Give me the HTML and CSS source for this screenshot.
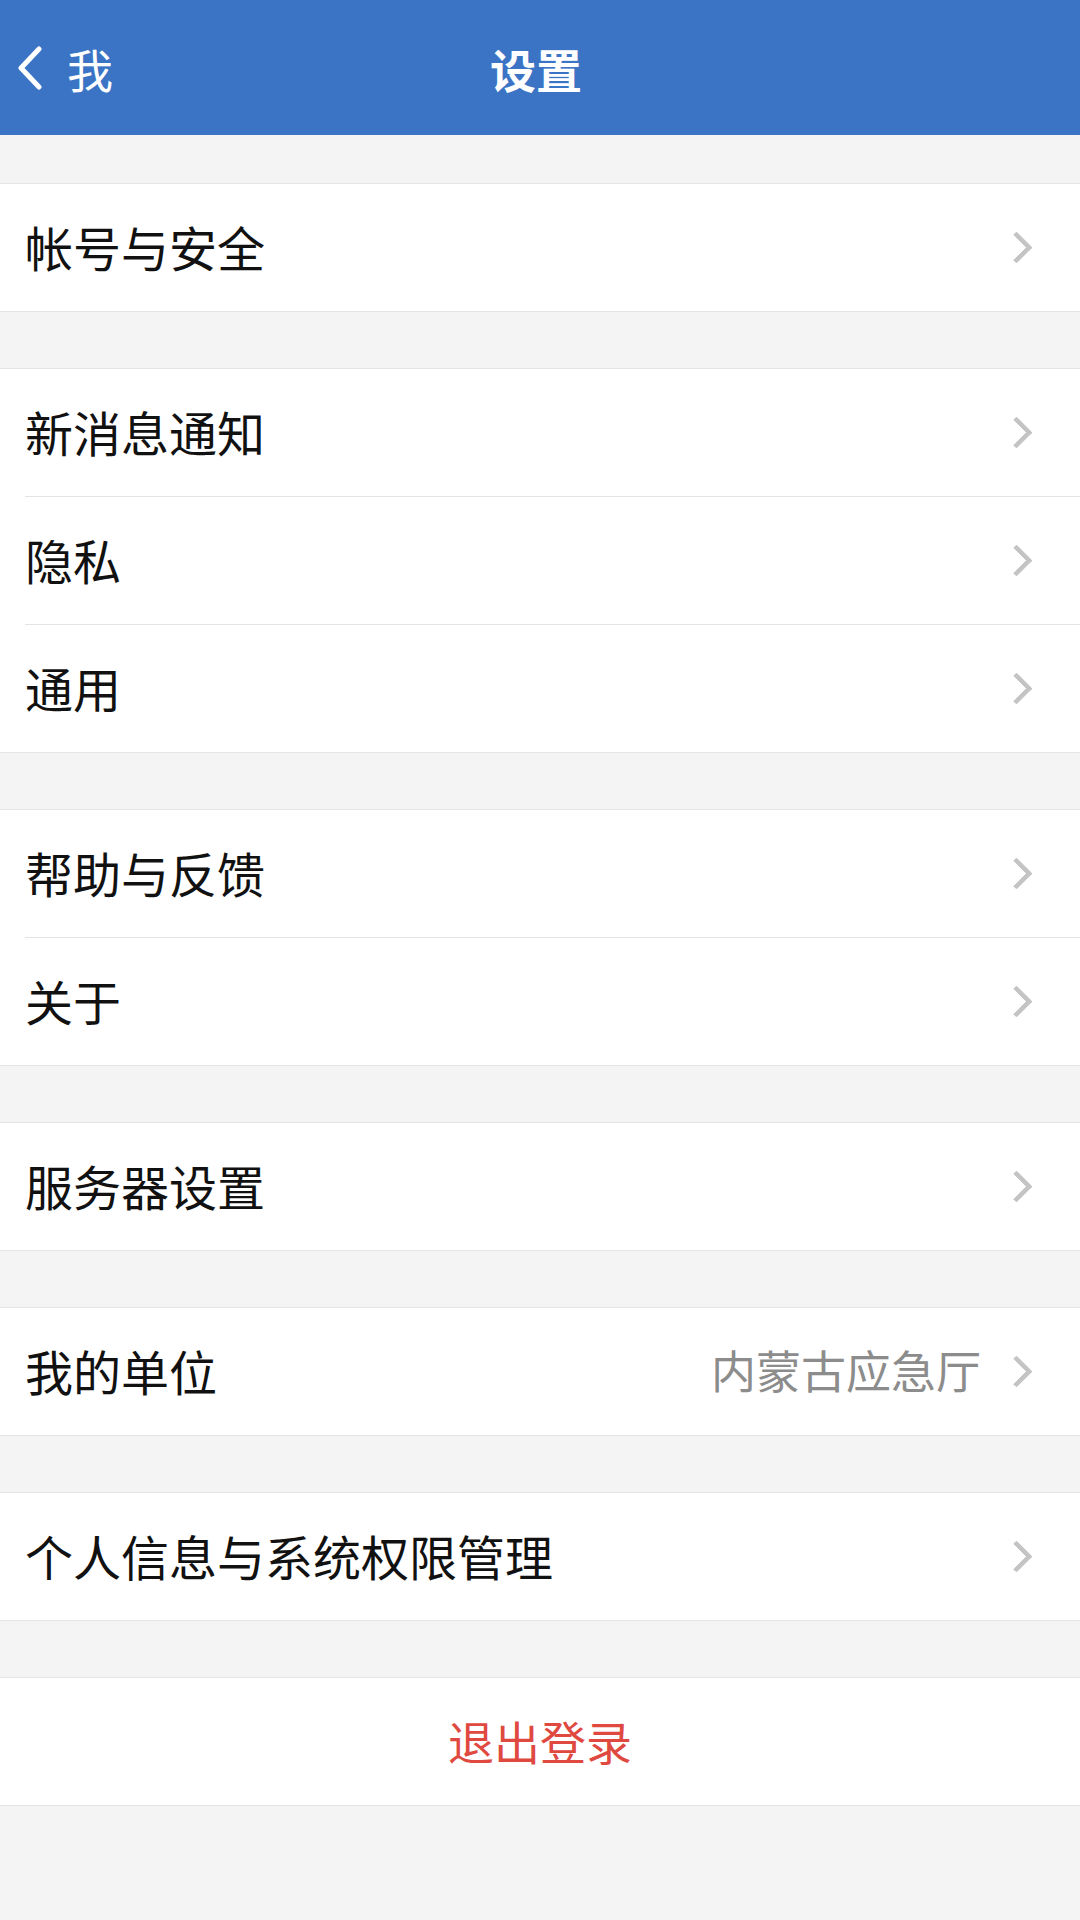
FILE: index.html
```html
<!DOCTYPE html>
<html lang="zh-CN">
<head>
    <meta charset="UTF-8">
    <meta name="viewport" content="width=device-width, initial-scale=1.0">
    <title>设置</title>
    <link rel="stylesheet" href="styles.css">
</head>
<body>
    <div class="page">
        <header class="navbar">
            <a class="nav-back" href="#">
                <svg class="back-icon" viewBox="0 0 26 44" width="26" height="44">
                    <path d="M22 3 L4 22 L22 41" fill="none" stroke="#fff" stroke-width="5" stroke-linecap="round" stroke-linejoin="round"/>
                </svg>
                <span>我</span>
            </a>
            <h1 class="nav-title">设置</h1>
            <div class="nav-right"></div>
        </header>

        <div class="group first">
            <a class="row" href="#"><div class="row-body"><span class="label">帐号与安全</span><i class="arrow"></i></div></a>
        </div>

        <div class="group">
            <a class="row" href="#"><div class="row-body"><span class="label">新消息通知</span><i class="arrow"></i></div></a>
            <a class="row" href="#"><div class="row-body"><span class="label">隐私</span><i class="arrow"></i></div></a>
            <a class="row" href="#"><div class="row-body"><span class="label">通用</span><i class="arrow"></i></div></a>
        </div>

        <div class="group">
            <a class="row" href="#"><div class="row-body"><span class="label">帮助与反馈</span><i class="arrow"></i></div></a>
            <a class="row" href="#"><div class="row-body"><span class="label">关于</span><i class="arrow"></i></div></a>
        </div>

        <div class="group">
            <a class="row" href="#"><div class="row-body"><span class="label">服务器设置</span><i class="arrow"></i></div></a>
        </div>

        <div class="group">
            <a class="row" href="#"><div class="row-body"><span class="label">我的单位</span><span class="value">内蒙古应急厅</span><i class="arrow"></i></div></a>
        </div>

        <div class="group">
            <a class="row" href="#"><div class="row-body"><span class="label">个人信息与系统权限管理</span><i class="arrow"></i></div></a>
        </div>

        <div class="group">
            <a class="row logout" href="#"><div class="row-body">退出登录</div></a>
        </div>
    </div>
</body>
</html>
```

FILE: styles.css
```css
body {
    margin: 0;
    background-color: #f4f4f4;
    font-family: "Noto Sans CJK SC", "Noto Sans", sans-serif;
    color: #111;
}
.page {
    min-height: 100vh;
    background-color: #f4f4f4;
}
a {
    color: inherit;
    text-decoration: none;
}

/* top bar */
.navbar {
    height: 135px;
    background-color: #3b74c5;
    display: grid;
    grid-template-columns: 1fr auto 1fr;
    align-items: center;
    color: #fff;
}
.nav-back {
    display: flex;
    align-items: center;
    gap: 24px;
    padding-left: 17px;
    font-size: 46px;
    color: #fff;
}
.back-icon {
    display: block;
}
.nav-title {
    margin: 0 8px 0 0;
    font-size: 46px;
    font-weight: 700;
}

/* list groups */
.group {
    background-color: #fff;
    border-top: 1px solid #e4e4e4;
    border-bottom: 1px solid #e4e4e4;
    margin-top: 56px;
}
.group.first {
    margin-top: 48px;
}
.row {
    display: block;
    padding-left: 25px;
}
.row-body {
    height: 127px;
    box-sizing: border-box;
    padding-bottom: 4px;
    display: flex;
    align-items: center;
    padding-right: 46px;
    font-size: 48px;
}
.row + .row .row-body {
    height: 128px;
    border-top: 1px solid #e4e4e4;
}
.label {
    flex: 1;
}
.value {
    color: #8c8c8c;
    font-size: 45px;
    margin-right: 24px;
}
.arrow {
    width: 18px;
    height: 18px;
    border-top: 5px solid #c4c4c4;
    border-right: 5px solid #c4c4c4;
    border-radius: 2px;
    transform: rotate(45deg);
    margin: 4px 6px 0 0;
}
.logout {
    padding-left: 0;
}
.logout .row-body {
    justify-content: center;
    padding-right: 0;
    font-size: 46px;
    color: #e0493f;
}
```
